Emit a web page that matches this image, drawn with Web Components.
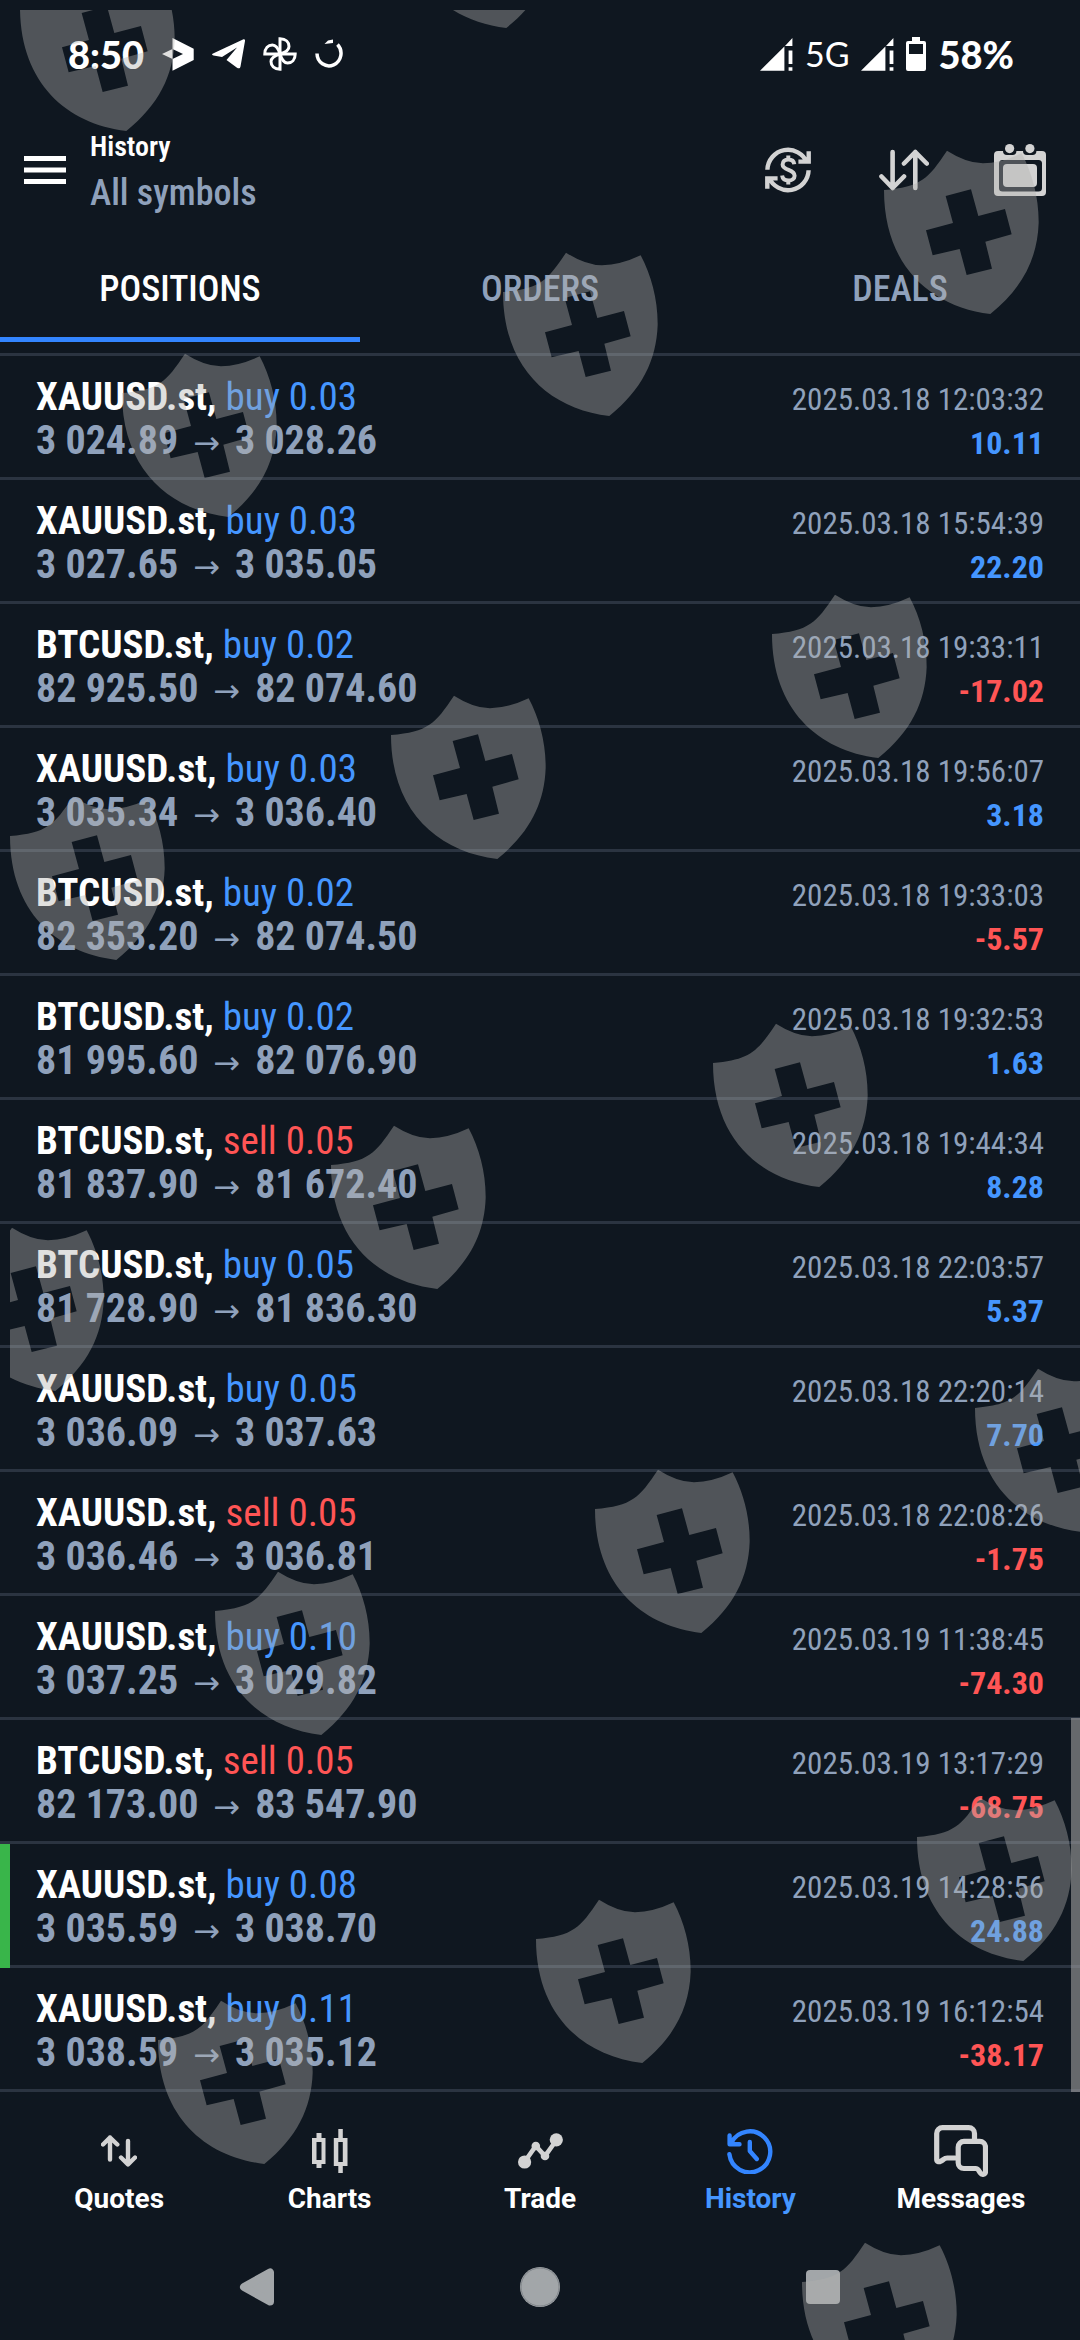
<!DOCTYPE html>
<html lang="en">
<head>
<meta charset="utf-8">
<meta name="viewport" content="width=device-width, initial-scale=1">
<title>History</title>
<style>
  body {
    margin: 0;
    background-color: #0f1720;
  }
</style>
</head>
<body>
<history-app></history-app>

<script>
const base = `
  * { box-sizing: border-box; }
  button {
    border: none;
    background: none;
    padding: 0;
    margin: 0;
    font: inherit;
    color: inherit;
  }
  svg { display: block; }
`

const icons = {
  app: `<svg width="32" height="33" viewBox="0 0 32 33"><path fill="#fff" fill-rule="evenodd" d="M0 16 10.500 11V0L31.700 10.700V22L10.500 32.700V21zM10.500 11 21 16 10.500 21z"/></svg>`,
  plane: `<svg width="33" height="30" viewBox="0 0 33 30"><path fill="#fff" d="M1 14.500 31 .5c1.500-.6 2.200 0 2 1.500L28.500 27.500c-.4 2-1.800 2.300-3.500 1.200L14.500 21 25 8.500 10 18 1.500 16.500C-.3 16-.4 15.200 1 14.500z"/></svg>`,
  fan: `<svg width="34" height="34" viewBox="0 0 34 34"><g fill="none" stroke="#fff" stroke-width="3"><path d="M17 17V1.800c6 0 9 3.500 9 7.600 0 3-2.500 5.600-9 7.600z"/><path transform="rotate(90 17 17)" d="M17 17V1.800c6 0 9 3.500 9 7.600 0 3-2.500 5.600-9 7.600z"/><path transform="rotate(180 17 17)" d="M17 17V1.800c6 0 9 3.500 9 7.600 0 3-2.500 5.600-9 7.600z"/><path transform="rotate(270 17 17)" d="M17 17V1.800c6 0 9 3.500 9 7.600 0 3-2.500 5.600-9 7.600z"/></g></svg>`,
  ring: `<svg width="28" height="30" viewBox="0 0 28 30"><path fill="none" stroke="#fff" stroke-width="3.500" d="M2 14.500A12 12.500 0 1 0 22.500 5.500"/><path fill="#fff" d="M9.500 5 13 1.500 18 .5V4z"/></svg>`,
  signal: `<svg width="33" height="33" viewBox="0 0 33 33"><path fill="#fff" d="M0 32.700 24.400 8.500V32.700zM25 8 32.400 0V8zM28.600 12.500h3.800V26h-3.800zM28.600 29.200h3.800v3.500h-3.800z"/></svg>`,
  battery: `<svg width="20" height="34" viewBox="0 0 20 34"><path fill="#fff" fill-rule="evenodd" d="M6 0h8v4h4a2 2 0 0 1 2 2v26a2 2 0 0 1-2 2H2a2 2 0 0 1-2-2V6a2 2 0 0 1 2-2h4zM3 7v10h14V7z"/></svg>`,
  menu: `<svg width="42" height="28" viewBox="0 0 42 28"><path fill="#fff" d="M0 0h42v5H0zM0 11.500h42v5H0zM0 23h42v5H0z"/></svg>`,
  currency: `<svg width="46" height="46" viewBox="0 0 46 46" fill="none" stroke="#d3d3d3" stroke-width="4.400"><path d="M2.400 22.800A20.600 20.600 0 0 1 42 15.500M43.700 4.300V14.600H33.400"/><path d="M43.600 23.200A20.600 20.600 0 0 1 4 30.500M2.300 41.700V31.400H12.600"/><path stroke-width="4" d="M29.300 17.200c-.4-3-2.800-4.700-6-4.700-3.400 0-5.700 2-5.700 4.900 0 6.400 12 4.700 12 11.300 0 2.900-2.600 4.800-6.100 4.800-3.600 0-6-2-6.400-5M23.300 8.500v4M23.300 33.400v4"/></svg>`,
  sort: `<svg width="50" height="42" viewBox="0 0 50 42" fill="none" stroke="#d3d3d3" stroke-width="4.600" stroke-linecap="round" stroke-linejoin="round"><path d="M13.600 3v36M2.500 27.500 13.600 39 25 27.500M36.300 39V3M25 14.500 36.300 3 47.700 14.500"/></svg>`,
  calendar: `<svg width="52" height="52" viewBox="0 0 52 52"><rect y="7" width="52" height="45" rx="4" fill="#d3d3d3"/><rect x="5" y="16" width="43" height="31.500" rx="3.500" fill="#0f1720"/><rect x="9" y="20" width="34" height="23" rx="4" fill="#d3d3d3"/><path fill="#0f1720" d="M9 3h13.400v4a4 4 0 0 1-4 4h-5.400a4 4 0 0 1-4-4zM29 3h13.400v4a4 4 0 0 1-4 4h-5.400a4 4 0 0 1-4-4z"/><circle cx="15.600" cy="4.600" r="4.600" fill="#d3d3d3"/><circle cx="35.900" cy="4.600" r="4.600" fill="#d3d3d3"/></svg>`,
  quotes: `<svg width="36" height="34" viewBox="0 0 36 34" fill="none" stroke="#d3d3d3" stroke-width="4.400" stroke-linecap="round" stroke-linejoin="round"><path d="M9 25.500V3.500M2 10.500 9 3.500 16.300 10.500M27 7v23M20 23.500 27 30.500 34 23.500"/></svg>`,
  charts: `<svg width="36" height="44" viewBox="0 0 36 44"><path fill="#d3d3d3" fill-rule="evenodd" d="M4.500 4h5v5h4v26h-4v4h-5v-4H0V9h4.500zM4.500 13v18h5V13zM26.300 0h4.500v9h4.700v28h-4.700v7h-4.500v-7h-4.500V9h4.500zM26.300 13v20h4.500V13z"/></svg>`,
  trade: `<svg width="45" height="36" viewBox="0 0 45 36"><path fill="none" stroke="#d3d3d3" stroke-width="4.600" d="M6.500 29 17.800 13 27 23 38.500 7"/><g fill="#d3d3d3"><circle cx="6.600" cy="29" r="6.600"/><circle cx="17.800" cy="13" r="4.300"/><circle cx="27" cy="23" r="4.300"/><circle cx="38.300" cy="6.800" r="6.600"/></g></svg>`,
  history: `<svg width="46" height="46" viewBox="0 0 46 46" fill="none" stroke="#3385ff" stroke-width="4.400" stroke-linecap="round" stroke-linejoin="round"><path d="M2.400 26.300A20.500 20.500 0 1 0 4.500 14.500M2.600 7.500V16.200H12.500M22.800 14v9L29.800 31"/></svg>`,
  messages: `<svg width="54" height="52" viewBox="0 0 54 52" fill="none" stroke="#d3d3d3" stroke-width="5.200" stroke-linecap="round" stroke-linejoin="round"><path d="M40.500 15V8.500a5.800 5.800 0 0 0-5.800-5.800H8.500A5.800 5.800 0 0 0 2.700 8.500V34.500c0 2 2 2.800 4 1.700 2.600-1.400 3.600-3.200 6.600-3.200H21"/><path d="M30 16.400H45.700a5.800 5.800 0 0 1 5.800 5.800V46.500c0 3-3.600 3.700-5.300 1.300-1.500-2-1.700-4.300-4.700-4.300H30a5.800 5.800 0 0 1-5.800-5.800V22.200a5.800 5.800 0 0 1 5.800-5.800z"/></svg>`,
}

class StatusBar extends HTMLElement{
  constructor(){
    super()
    this._shadowRoot = this.attachShadow({mode:'open'})
  }
  connectedCallback(){
    this._shadowRoot.innerHTML=`
      <style>
        ${base}
        :host {
          display: flex;
          justify-content: space-between;
          align-items: center;
          height: 108px;
          padding: 0 66px 0 68px;
          font: 900 38px/44px Lato, sans-serif;
          color: #fff;
        }
        .side {
          display: flex;
          align-items: center;
          gap: 18px;
        }
        .right { gap: 12px; }
        .net { font-weight: 400; font-size: 34px; }
      </style>
      <div class="side">
        <span>8:50</span>
        ${icons.app}${icons.plane}${icons.fan}${icons.ring}
      </div>
      <div class="side right">
        ${icons.signal}
        <span class="net">5G</span>
        ${icons.signal}${icons.battery}
        <span>58%</span>
      </div>
    `
  }
}

class AppHeader extends HTMLElement{
  constructor(){
    super()
    this._shadowRoot = this.attachShadow({mode:'open'})
  }
  connectedCallback(){
    this._shadowRoot.innerHTML=`
      <style>
        ${base}
        :host {
          display: flex;
          align-items: center;
          height: 124px;
          padding: 0 34px 0 24px;
        }
        .titles {
          flex: 1;
          display: flex;
          flex-direction: column;
          gap: 4px;
          padding: 5px 0 0 24px;
        }
        h1 {
          margin: 0;
          font-size: 28px;
          font-weight: 600;
          line-height: 36px;
          color: #fff;
        }
        .sub {
          font-size: 36px;
          font-weight: 500;
          line-height: 48px;
          color: #8fa1bb;
        }
        .tools {
          display: flex;
          gap: 64px;
        }
        .tools button {
          display: grid;
          place-items: center;
          width: 52px;
          height: 52px;
        }
      </style>
      <button aria-label="Menu">${icons.menu}</button>
      <div class="titles">
        <h1><slot name="title"></slot></h1>
        <div class="sub"><slot name="filter"></slot></div>
      </div>
      <div class="tools">
        <button aria-label="Currency">${icons.currency}</button>
        <button aria-label="Sort">${icons.sort}</button>
        <button aria-label="Period">${icons.calendar}</button>
      </div>
    `
  }
}

class TabBar extends HTMLElement{
  constructor(){
    super()
    this._shadowRoot = this.attachShadow({mode:'open'})
  }
  connectedCallback(){
    this._shadowRoot.innerHTML=`
      <style>
        ${base}
        :host {
          display: flex;
          padding-bottom: 11px;
          border-bottom: 3px solid #2b3441;
        }
        button {
          flex: 1;
          padding: 35px 0 26px;
          border-bottom: 5px solid transparent;
          font-size: 36px;
          font-weight: 500;
          line-height: 44px;
          color: #8fa1bb;
        }
        .active {
          color: #fff;
          border-color: #3385ff;
        }
      </style>
      <button class="active">POSITIONS</button>
      <button>ORDERS</button>
      <button>DEALS</button>
    `
  }
}

class DealRow extends HTMLElement{
  constructor(){
    super()
    this._shadowRoot = this.attachShadow({mode:'open'})
  }
  connectedCallback(){
    const get = name => this.getAttribute(name)
    const loss = get('profit').startsWith('-')
    this._shadowRoot.innerHTML=`
      <style>
        ${base}
        :host {
          position: relative;
          display: grid;
          grid-template: 44px 44px / 1fr auto;
          align-items: baseline;
          padding: 19px 36px 14px;
          border-bottom: 3px solid #2b3441;
          font-size: 40px;
          line-height: 44px;
          color: #8fa1bb;
        }
        :host([marked])::before {
          content: "";
          position: absolute;
          left: 0;
          top: 0;
          bottom: -3px;
          width: 10px;
          background-color: #39b54a;
        }
        .deal { font-size: 39px; }
        b { color: #fff; }
        .buy, .gain { color: #4596ff; }
        .sell, .loss { color: #ff5555; }
        .prices { font-weight: 700; }
        .arrow {
          font: 400 32px/32px "DejaVu Sans", sans-serif;
          padding: 0 15px;
        }
        .time { font-size: 31px; }
        .profit {
          font-size: 32px;
          font-weight: 700;
          text-align: right;
        }
      </style>
      <div class="deal"><b>${get('symbol')},</b> <span class="${get('side')}">${get('side')} ${get('volume')}</span></div>
      <time class="time">${get('time')}</time>
      <div class="prices">${get('open')}<span class="arrow">→</span>${get('close')}</div>
      <div class="profit ${loss ? 'loss' : 'gain'}">${get('profit')}</div>
    `
  }
}

const deals = [
  ['XAUUSD.st', 'buy', '0.03', '3 024.89', '3 028.26', '2025.03.18 12:03:32', '10.11'],
  ['XAUUSD.st', 'buy', '0.03', '3 027.65', '3 035.05', '2025.03.18 15:54:39', '22.20'],
  ['BTCUSD.st', 'buy', '0.02', '82 925.50', '82 074.60', '2025.03.18 19:33:11', '-17.02'],
  ['XAUUSD.st', 'buy', '0.03', '3 035.34', '3 036.40', '2025.03.18 19:56:07', '3.18'],
  ['BTCUSD.st', 'buy', '0.02', '82 353.20', '82 074.50', '2025.03.18 19:33:03', '-5.57'],
  ['BTCUSD.st', 'buy', '0.02', '81 995.60', '82 076.90', '2025.03.18 19:32:53', '1.63'],
  ['BTCUSD.st', 'sell', '0.05', '81 837.90', '81 672.40', '2025.03.18 19:44:34', '8.28'],
  ['BTCUSD.st', 'buy', '0.05', '81 728.90', '81 836.30', '2025.03.18 22:03:57', '5.37'],
  ['XAUUSD.st', 'buy', '0.05', '3 036.09', '3 037.63', '2025.03.18 22:20:14', '7.70'],
  ['XAUUSD.st', 'sell', '0.05', '3 036.46', '3 036.81', '2025.03.18 22:08:26', '-1.75'],
  ['XAUUSD.st', 'buy', '0.10', '3 037.25', '3 029.82', '2025.03.19 11:38:45', '-74.30'],
  ['BTCUSD.st', 'sell', '0.05', '82 173.00', '83 547.90', '2025.03.19 13:17:29', '-68.75'],
  ['XAUUSD.st', 'buy', '0.08', '3 035.59', '3 038.70', '2025.03.19 14:28:56', '24.88', true],
  ['XAUUSD.st', 'buy', '0.11', '3 038.59', '3 035.12', '2025.03.19 16:12:54', '-38.17'],
]

class DealList extends HTMLElement{
  constructor(){
    super()
    this._shadowRoot = this.attachShadow({mode:'open'})
  }
  connectedCallback(){
    this._shadowRoot.innerHTML=`
      <style>
        ${base}
        :host {
          position: relative;
          display: block;
        }
        .thumb {
          position: absolute;
          right: 0;
          bottom: 0;
          width: 9px;
          height: 374px;
          background-color: rgba(160, 160, 160, .6);
        }
      </style>
      <div role="list">
        ${deals.map(([symbol, side, volume, open, close, time, profit, marked]) => `
          <deal-row role="listitem" symbol="${symbol}" side="${side}" volume="${volume}"
            open="${open}" close="${close}" time="${time}" profit="${profit}" ${marked ? 'marked' : ''}></deal-row>
        `).join('')}
      </div>
      <div class="thumb"></div>
    `
  }
}

class NavItem extends HTMLElement{
  constructor(){
    super()
    this._shadowRoot = this.attachShadow({mode:'open'})
  }
  connectedCallback(){
    this._shadowRoot.innerHTML=`
      <style>
        ${base}
        :host {
          display: block;
          flex: 1;
          color: #fff;
        }
        :host([active]) { color: #4596ff; }
        a {
          display: flex;
          flex-direction: column;
          align-items: center;
          gap: 6px;
          color: inherit;
          text-decoration: none;
          font: 700 28px/32px Roboto, sans-serif;
        }
        .icon {
          display: grid;
          place-items: center;
          height: 52px;
        }
      </style>
      <a href="#${this.getAttribute('icon')}">
        <span class="icon">${icons[this.getAttribute('icon')]}</span>
        <slot></slot>
      </a>
    `
  }
}

class BottomNav extends HTMLElement{
  constructor(){
    super()
    this._shadowRoot = this.attachShadow({mode:'open'})
  }
  connectedCallback(){
    this._shadowRoot.innerHTML=`
      <style>
        ${base}
        :host { display: block; }
        nav {
          display: flex;
          padding: 33px 14px 15px;
        }
      </style>
      <nav>
        <nav-item icon="quotes">Quotes</nav-item>
        <nav-item icon="charts">Charts</nav-item>
        <nav-item icon="trade">Trade</nav-item>
        <nav-item icon="history" active>History</nav-item>
        <nav-item icon="messages">Messages</nav-item>
      </nav>
    `
  }
}

class SystemNav extends HTMLElement{
  constructor(){
    super()
    this._shadowRoot = this.attachShadow({mode:'open'})
  }
  connectedCallback(){
    this._shadowRoot.innerHTML=`
      <style>
        ${base}
        :host {
          display: flex;
          height: 110px;
          padding: 2px 115px 0;
        }
        button {
          flex: 1;
          display: grid;
          place-items: center;
        }
      </style>
      <button aria-label="Back"><svg width="36" height="38" viewBox="0 0 36 38"><path fill="#a2a6a9" stroke="#a2a6a9" stroke-width="8" stroke-linejoin="round" d="M5 19 31 4.500V33.500z"/></svg></button>
      <button aria-label="Home"><svg width="42" height="42" viewBox="0 0 42 42"><circle cx="21" cy="21" r="20" fill="#a2a6a9"/><circle cx="21" cy="21" r="19" fill="none" stroke="#80858a"/></svg></button>
      <button aria-label="Recents"><svg width="36" height="36" viewBox="0 0 36 36"><rect x="1" y="1" width="34" height="34" rx="4" fill="#a2a6a9"/></svg></button>
    `
  }
}

// tiled shields drawn over the whole screen
const shields = [
  [-11, -58], [369, -161], [853, 125], [472, 227], [91, 328], [741, 569],
  [360, 670], [-21, 771], [682, 998], [300, 1100], [-82, 1202], [944, 1343],
  [564, 1444], [184, 1546], [886, 1772], [505, 1874], [127, 1975], [771, 2217],
]

class ShieldPattern extends HTMLElement{
  constructor(){
    super()
    this._shadowRoot = this.attachShadow({mode:'open'})
  }
  connectedCallback(){
    this._shadowRoot.innerHTML=`
      <style>
        :host {
          position: absolute;
          inset: 10px 0 0 10px;
          overflow: hidden;
          pointer-events: none;
        }
        svg { display: block; width: 100%; height: 100%; }
      </style>
      <svg aria-hidden="true" fill="#b2b2af" fill-opacity=".4">
        <defs>
          <path id="shield" transform="scale(.3333)" fill-rule="evenodd" d="M252 47Q310 84 360 85Q415 84 476 55C508 115 528 190 527 265C523 370 480 458 382 537C200 515 63 390 63 165C175 155 195 132 252 47zM248 183 270 264 189 286 209 361 290 342 311 420 387 401 367 320 446 298 426 222 346 243 324 163z"/>
        </defs>
        ${shields.map(([x, y]) => `<use href="#shield" x="${x}" y="${y}"/>`).join('')}
      </svg>
    `
  }
}

class HistoryApp extends HTMLElement{
  constructor(){
    super()
    this._shadowRoot = this.attachShadow({mode:'open'})
  }
  connectedCallback(){
    this._shadowRoot.innerHTML=`
      <style>
        :host {
          position: relative;
          display: flex;
          flex-direction: column;
          min-height: 100vh;
          overflow: hidden;
          background-color: #0f1720;
          font-family: "Roboto Condensed", "Liberation Sans Narrow", sans-serif;
        }
        deal-list { flex: 1; }
      </style>
      <status-bar></status-bar>
      <app-header>
        <span slot="title">History</span>
        <span slot="filter">All symbols</span>
      </app-header>
      <tab-bar></tab-bar>
      <deal-list></deal-list>
      <bottom-nav></bottom-nav>
      <system-nav></system-nav>
      <shield-pattern></shield-pattern>
    `
  }
}

window.customElements.define('status-bar',StatusBar)
window.customElements.define('app-header',AppHeader)
window.customElements.define('tab-bar',TabBar)
window.customElements.define('deal-row',DealRow)
window.customElements.define('deal-list',DealList)
window.customElements.define('nav-item',NavItem)
window.customElements.define('bottom-nav',BottomNav)
window.customElements.define('system-nav',SystemNav)
window.customElements.define('shield-pattern',ShieldPattern)
window.customElements.define('history-app',HistoryApp)
</script>
</body>
</html>
